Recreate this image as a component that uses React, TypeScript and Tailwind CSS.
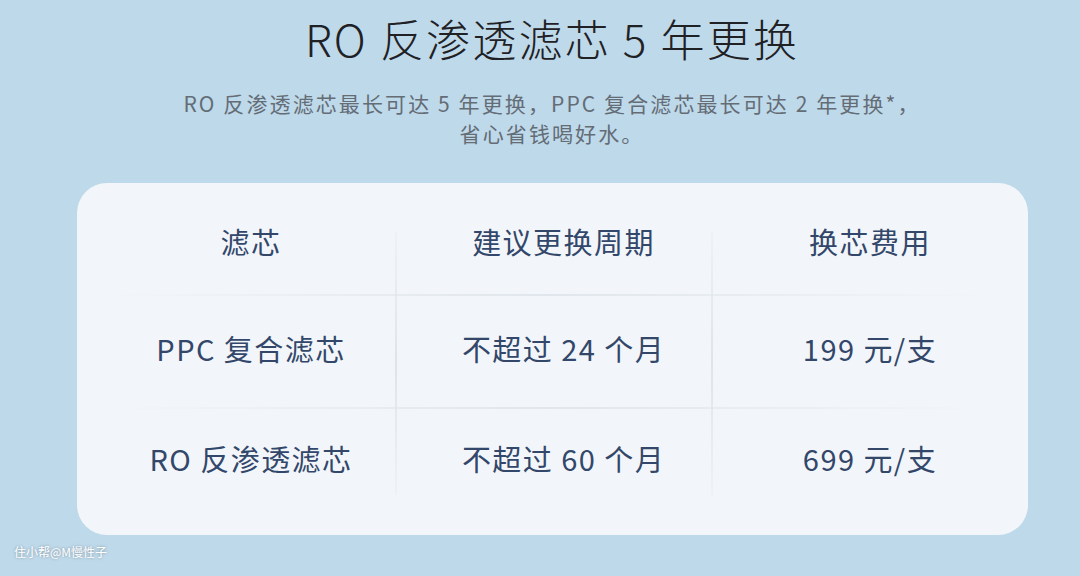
import React from "react";

const rows = [
  { name: "PPC 复合滤芯", cycle: "不超过 24 个月", price: "199 元/支" },
  { name: "RO 反渗透滤芯", cycle: "不超过 60 个月", price: "699 元/支" },
];

const cjk = { fontFamily: '"Noto Sans CJK SC", "Noto Sans", sans-serif' };

const HLine = () => (
  <div className="col-span-5 mr-[38px] h-[2px] bg-gradient-to-r from-transparent via-[#e1e6ec] to-transparent" />
);

const VLine = ({ col }: { col: string }) => (
  <div
    className={`${col} row-start-1 row-span-5 self-start mt-[49px] h-[263px] w-[2px] bg-gradient-to-b from-[#eef2f6] via-[#dfe4ea] to-[#eef2f6]`}
  />
);

const App = () => {
  return (
    <div
      className="w-[1080px] h-[576px] overflow-hidden bg-[#bed9ea] flex flex-col items-center pl-[24px] relative"
      style={cjk}
    >
      <h1 className="mt-[12px] text-[44px] leading-[53px] font-light text-[#1f2124] tracking-[0.05em]">
        RO 反渗透滤芯 5 年更换
      </h1>
      <p className="mt-[23px] text-center text-[21px] leading-[30px] text-[#646c76] tracking-[0.1em]">
        RO 反渗透滤芯最长可达 5 年更换，PPC 复合滤芯最长可达 2 年更换*，
        <br />
        省心省钱喝好水。
      </p>

      <div className="mt-[35px] w-[951px] h-[352px] rounded-[30px] bg-[#f2f6fa] pl-[31px] grid grid-cols-[287px_2px_314px_2px_315px] grid-rows-[111px_2px_111px_2px_126px] text-[#33476a] text-[29px] font-normal tracking-[0.05em]">
        <VLine col="col-start-2" />
        <VLine col="col-start-4" />

        <div className="col-start-1 row-start-1 flex items-center justify-center pt-[7px]">滤芯</div>
        <div className="col-start-3 row-start-1 flex items-center justify-center pt-[7px] pl-[20px]">建议更换周期</div>
        <div className="col-start-5 row-start-1 flex items-center justify-center pt-[7px]">换芯费用</div>
        <div className="col-start-1 row-start-2 col-span-5">
          <HLine />
        </div>

        {rows.map((r, i) => {
          const rowCls = i === 0 ? "row-start-3 items-center pb-[6px]" : "row-start-5 items-start pt-[28px]";
          return (
            <React.Fragment key={r.name}>
              <div className={`col-start-1 ${rowCls} flex justify-center`}>{r.name}</div>
              <div className={`col-start-3 ${rowCls} flex justify-center pl-[20px]`}>{r.cycle}</div>
              <div className={`col-start-5 ${rowCls} flex justify-center`}>{r.price}</div>
            </React.Fragment>
          );
        })}
        <div className="col-start-1 row-start-4 col-span-5">
          <HLine />
        </div>
      </div>

      <div className="absolute left-[14px] top-[543px] text-[12px] leading-[18px] text-white [text-shadow:0_0_3px_rgba(0,0,0,0.35)]">
        住小帮@M慢性子
      </div>
    </div>
  );
};

export default App;
